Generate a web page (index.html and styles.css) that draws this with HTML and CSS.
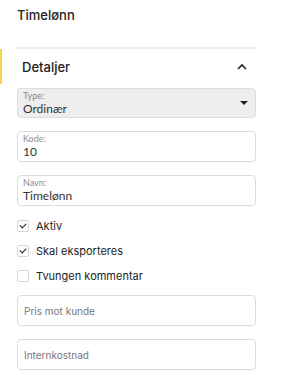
FILE: index.html
```html
<!DOCTYPE html>
<html lang="nb">
<head>
    <meta charset="UTF-8">
    <meta name="viewport" content="width=device-width, initial-scale=1.0">
    <title>Timelønn</title>
    <link rel="stylesheet" href="styles.css">
</head>
<body>
    <div class="page">
        <h1 class="title">Timelønn</h1>

        <section class="panel">
            <div class="panel-header">
                <span class="active-bar"></span>
                <h2>Detaljer</h2>
                <svg class="chevron" width="10" height="7" viewBox="0 0 10 7">
                    <path d="M1 6 L5 2 L9 6" fill="none" stroke="#222" stroke-width="1.6"/>
                </svg>
            </div>

            <div class="fields">
                <div class="field field-select">
                    <label>Type:</label>
                    <div class="value">Ordinær</div>
                    <span class="caret"></span>
                </div>

                <div class="field">
                    <label>Kode:</label>
                    <div class="value">10</div>
                </div>

                <div class="field">
                    <label>Navn:</label>
                    <div class="value">Timelønn</div>
                </div>

                <div class="checks">
                    <label class="check">
                        <span class="box checked"></span>
                        Aktiv
                    </label>
                    <label class="check">
                        <span class="box checked"></span>
                        Skal eksporteres
                    </label>
                    <label class="check">
                        <span class="box"></span>
                        Tvungen kommentar
                    </label>
                </div>

                <div class="field field-empty">Pris mot kunde</div>
                <div class="field field-empty">Internkostnad</div>
            </div>
        </section>
    </div>
</body>
</html>
```

FILE: styles.css
```css
* {
    margin: 0;
    padding: 0;
    box-sizing: border-box;
}

body {
    font-family: Inter, 'Noto Sans', sans-serif;
    background: #fff;
    color: #222;
}

.page {
    padding: 7px 27px 0 17px;
}

.title {
    font-size: 13px;
    font-weight: 500;
    line-height: 16px;
    margin-bottom: 24px;
}

.panel {
    border-top: 2px solid #ececec;
}

.panel-header {
    position: relative;
    display: flex;
    align-items: center;
    justify-content: space-between;
    height: 35px;
    padding: 0 9px 0 5px;
}

.panel-header h2 {
    font-size: 13px;
    font-weight: 500;
}

.active-bar {
    position: absolute;
    left: -17px;
    top: 0;
    width: 2px;
    height: 35px;
    background: #f5d34a;
}

.fields {
    display: flex;
    flex-direction: column;
    gap: 13px;
    padding-top: 4px;
}

.field {
    position: relative;
    height: 31px;
    border: 1px solid #dcdcdc;
    border-radius: 4px;
    padding: 2px 5px 0;
    font-family: Lato, 'Noto Sans', sans-serif;
}

.field label {
    display: block;
    font-size: 9px;
    line-height: 10px;
    color: #8a8a8a;
}

.field .value {
    font-size: 12px;
    line-height: 15px;
    color: #333;
}

.field-select {
    background: #eeeeee;
    height: 30px;
}

.caret {
    position: absolute;
    right: 7px;
    top: 12px;
    border-left: 4px solid transparent;
    border-right: 4px solid transparent;
    border-top: 4px solid #222;
}

.checks {
    display: flex;
    flex-direction: column;
    gap: 11px;
    margin-bottom: -1px;
}

.check {
    display: flex;
    align-items: center;
    gap: 7px;
    font-size: 11px;
    line-height: 14px;
    color: #222;
}

.box {
    width: 12px;
    height: 12px;
    border: 1px solid #d6d6d6;
    border-radius: 2px;
    position: relative;
}

.box.checked::after {
    content: "";
    position: absolute;
    left: 3px;
    top: 1px;
    width: 3px;
    height: 5px;
    border-right: 1.5px solid #222;
    border-bottom: 1.5px solid #222;
    transform: rotate(45deg);
}

.field-empty {
    display: flex;
    align-items: center;
    padding: 0 6px;
    font-family: Inter, 'Noto Sans', sans-serif;
    font-size: 10px;
    color: #777;
}
```
